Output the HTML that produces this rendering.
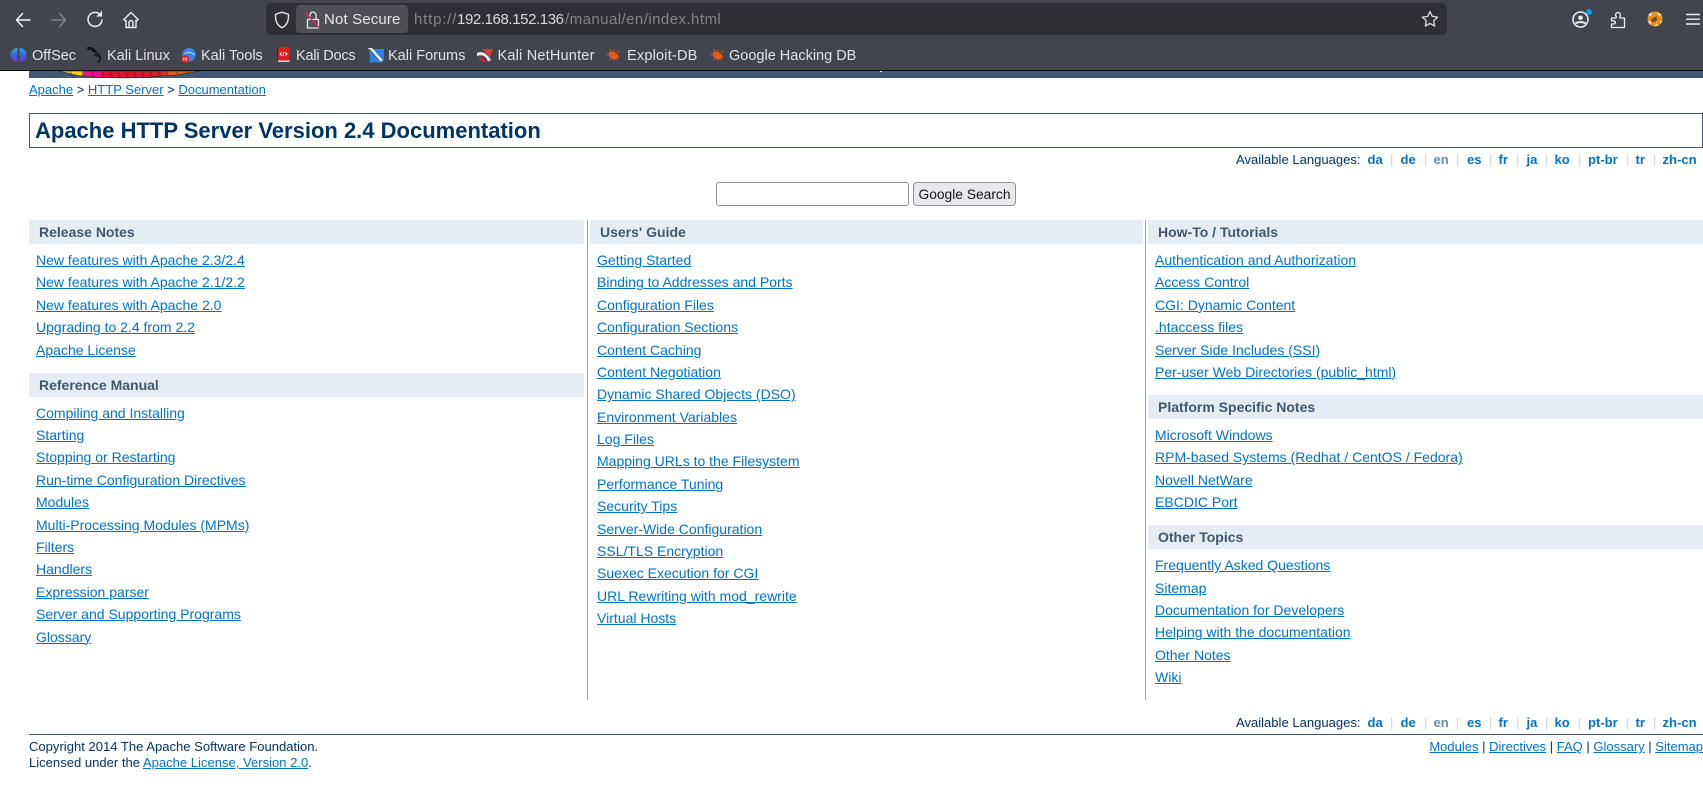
<!DOCTYPE html>
<html lang="en"><head><meta charset="utf-8"><title>Apache HTTP Server Version 2.4 Documentation</title>
<style>
html,body{margin:0;padding:0;background:#fff;width:1703px;height:786px;overflow:hidden}
body{position:relative;font-family:"Liberation Sans",sans-serif;font-size:14.02px;color:#036}
a{color:#0073c7;text-decoration:underline}
.abs{position:absolute}
#tb{position:absolute;left:0;top:0;width:1703px;height:70px;background:#42454e}
#blk{position:absolute;left:0;top:70px;width:1703px;height:1px;background:#0c0c0d}
#blue{position:absolute;left:29px;top:71px;width:1674px;height:7px;background:#405871}
#url{position:absolute;left:266px;top:3px;width:1181px;height:32px;background:#2f3036;border-radius:5px}
#pill{position:absolute;left:296px;top:5px;width:112px;height:28px;background:#4e5056;border-radius:4px}
.ui{position:absolute;font-size:14.5px;line-height:20px;color:#e2e3e6;white-space:nowrap}
.ic{position:absolute;overflow:visible}
#h1{position:absolute;left:29px;top:113px;width:1672px;height:33px;border:1px solid #405871;margin:0}
#h1 span{position:absolute;left:5px;top:3px;font-size:22px;line-height:28px;font-weight:bold;color:#036;white-space:nowrap}
.bc{position:absolute;left:29px;top:81px;font-size:13px;line-height:18px;color:#036;white-space:nowrap}
.lg{position:absolute;font-size:13.05px;line-height:16px;white-space:nowrap;color:#036}
.lg b a{text-decoration:none}
.lg.s{color:#ccd3da}
.lg.e{color:#6b8cae;font-weight:bold}
#q{position:absolute;left:716px;top:182px;width:193px;height:24px;box-sizing:border-box;border:1px solid #8f8f9d;border-radius:3px;background:#fff}
#b{position:absolute;left:913px;top:182px;width:103px;height:24px;box-sizing:border-box;border:1px solid #8f8f9d;border-radius:4px;background:#e9e9ed;color:#15141a;font-size:13.8px;line-height:23px;text-align:center;white-space:nowrap}
.col{position:absolute;top:220px}
.col section{margin-bottom:11.8px}
.col h2{margin:0;height:24px;line-height:24px;background:#e5ecf3;color:#405871;font-size:14px;font-weight:bold;padding-left:10px;white-space:nowrap}
.col ul{list-style:none;margin:4.95px 0 0;padding:0 0 0 7px}
.col li{height:22.4px;line-height:22.4px;white-space:nowrap}
.vl{position:absolute;top:220px;width:1px;height:480px;background:#a2a2a2}
#fl{position:absolute;left:29px;top:734px;width:1674px;height:1px;background:#405871}
.ft{position:absolute;font-size:13.05px;line-height:16px;white-space:nowrap;color:#036}
</style></head><body>
<div id="tb"></div><div id="blk"></div>
<div id="blue"></div>
<svg class="ic" style="left:0;top:71px" width="260" height="8" viewBox="0 71 260 8">
<defs><linearGradient id="fg" x1="59" x2="200" y1="0" y2="0" gradientUnits="userSpaceOnUse"><stop offset="0" stop-color="#f2d000"/><stop offset=".16" stop-color="#f8d010"/><stop offset=".18" stop-color="#f0109a"/><stop offset=".28" stop-color="#e8108a"/><stop offset=".33" stop-color="#e01030"/><stop offset=".72" stop-color="#d81a28"/><stop offset=".8" stop-color="#e8601a"/><stop offset="1" stop-color="#b87020"/></linearGradient></defs>
<path d="M59 71H200L176 75 150 77 126 78 100 77.5 78 75.5Z" fill="url(#fg)" stroke="#2a1a1a" stroke-width=".5"/>
<path d="M70 71l2 5M82 71l2 6M92 71l2 6M102 71l2 7M110 71l2 7M118 71l2 7M126 71l2 7M134 71l2 7M142 71l2 6M150 71l2 6M158 71l2 5M166 71l2 5M176 71l2 3M186 71l2 2" stroke="#3a1a20" stroke-width="1" opacity=".55"/>
</svg>
<div class="abs" style="left:880px;top:71px;width:2px;height:1px;background:#fff"></div>

<svg class="ic" style="left:14px;top:10px" width="18" height="20" viewBox="0 0 18 20" fill="none" stroke="#f2f3f5" stroke-width="1.5" stroke-linecap="round" stroke-linejoin="round"><path d="M2.5 10H16M8.5 3.5 2.5 10l6 6.5"/></svg>
<svg class="ic" style="left:50px;top:10px" width="18" height="20" viewBox="0 0 18 20" fill="none" stroke="#82848b" stroke-width="1.5" stroke-linecap="round" stroke-linejoin="round"><path d="M15.5 10H2M9.5 3.5l6 6.5-6 6.5"/></svg>
<svg class="ic" style="left:86px;top:10px" width="18" height="20" viewBox="0 0 18 20" fill="none" stroke="#eceded" stroke-width="1.5" stroke-linecap="round" stroke-linejoin="round"><path d="M13.7 4.2A7 7 0 1 0 16 10"/><path d="M15.5 1.5v4.6h-4.6" fill="#eceded" stroke-width="1"/></svg>
<svg class="ic" style="left:122px;top:10px" width="18" height="20" viewBox="0 0 18 20" fill="none" stroke="#eceded" stroke-width="1.4" stroke-linejoin="round"><path d="M1.800 9.500 9 2.500l7.200 7-1.500 1.400-.7-.6V17.500H4V10.300l-.7.6Z"/><path d="M7 17.500V12.500a2 2 0 0 1 4 0v5"/></svg>
<div id="url"></div><div id="pill"></div>
<svg class="ic" style="left:274px;top:11px" width="16" height="18" viewBox="0 0 16 18" fill="none" stroke="#e4e5e8" stroke-width="1.4" stroke-linejoin="round"><path d="M8 1.200 14.500 3.300c.2 6-1 10.500-6.500 13.500C2.500 13.800 1.300 9.300 1.500 3.300Z"/></svg>
<svg class="ic" style="left:305px;top:10px" width="16" height="20" viewBox="0 0 16 20" fill="none"><path d="M2.500 9.500H13.500V18H2.500ZM5 9.500V5a3 3 0 0 1 6 0V9.500" stroke="#e8e8ea" stroke-width="1.3"/><path d="M1 3 15 19" stroke="#e22850" stroke-width="1.500"/></svg>
<div class="ui" style="left:324px;top:10px;font-size:15px;letter-spacing:.15px;color:#e8e8ea">Not Secure</div>
<div class="ui" style="left:414px;top:10px;font-size:15px;letter-spacing:.8px;color:#84858a">http://</div>
<div class="ui" style="left:457px;top:10px;font-size:15px;letter-spacing:-.4px;color:#d8d9dc">192.168.152.136</div>
<div class="ui" style="left:565px;top:10px;font-size:15px;letter-spacing:.45px;color:#84858a">/manual/en/index.html</div>
<svg class="ic" style="left:1421px;top:10px" width="18" height="18" viewBox="0 0 18 18" fill="none" stroke="#dcdde0" stroke-width="1.3" stroke-linejoin="round"><path d="M9 1.500 11.300 6.400l5.300.7-3.900 3.700 1 5.300L9 13.500 4.300 16.100l1-5.300L1.400 7.100l5.300-.7Z"/></svg>

<svg class="ic" style="left:1572px;top:11px" width="18" height="18" viewBox="0 0 18 18" fill="none" stroke="#eceded" stroke-width="1.500"><circle cx="8.500" cy="8.500" r="7.500"/><circle cx="8.500" cy="6.800" r="2.300" fill="#eceded" stroke="none"/><path d="M3.500 12.500c2-1.800 8-1.800 10 0" stroke-width="2"/></svg>
<div class="abs" style="left:1586px;top:9px;width:6px;height:6px;border-radius:50%;background:#0a9fea"></div>
<svg class="ic" style="left:1610px;top:11px" width="18" height="18" viewBox="0 0 18 18" fill="none" stroke="#eceded" stroke-width="1.300" stroke-linejoin="round"><path d="M1.500 7H5.500C6.500 7 6.500 6 6 5.300 5 3.800 6 1.500 8 1.500s3 2.300 2 3.800C9.600 6 9.600 7 10.500 7H14.500V16.500H1.500V13H3.500C6 13 6 9.800 3.500 9.800H1.500Z"/></svg>
<svg class="ic" style="left:1647px;top:11px" width="16" height="16" viewBox="0 0 16 16"><circle cx="8" cy="8" r="7.500" fill="#e8900f"/><path d="M1 4 5 1 4 5ZM10 1l5 3-3 1ZM1 10l3 1-1 3ZM7 15l3-2 1 2ZM13 10l2 0-2 3Z" fill="#f4f1ea"/><path d="M4 8 11 4.500 12 7 8 11l-3 0Z" fill="#7a4a18"/><path d="M9 6l3-1-1 3Z" fill="#f6b53c"/></svg>
<svg class="ic" style="left:1685px;top:12px" width="16" height="14" viewBox="0 0 16 14" stroke="#eceded" stroke-width="1.400"><path d="M1 2.500H15M1 7.200H15M1 12H15"/></svg>

<svg class="ic" style="left:11px;top:48px" width="15" height="14" viewBox="0 0 15 14"><defs><linearGradient id="os" x1="0" x2="0" y1="0" y2="1"><stop offset="0" stop-color="#2fa3d8"/><stop offset=".55" stop-color="#3a62d8"/><stop offset="1" stop-color="#7a30c8"/></linearGradient></defs><path d="M6.500 0A7 7 0 0 0 6.500 14ZM8.500 0A7 7 0 0 1 8.500 14Z" fill="url(#os)"/></svg>
<div class="ui" style="left:32px;top:46px">OffSec</div>
<svg class="ic" style="left:87px;top:47px" width="15" height="16" viewBox="0 0 15 16" fill="none" stroke="#0a0a0a" stroke-width="1.300" stroke-linecap="round"><path d="M.5 1C3 .5 6 1 8 3.500L5 3.800C8 4.500 11.500 6.500 13 9.500 14 12 12.500 13.500 11.500 15.500"/><path d="M1 2.500 5 2M7 8c1.500-.6 3 .2 4 1.500"/></svg>
<div class="ui" style="left:107px;top:46px">Kali Linux</div>
<svg class="ic" style="left:181px;top:48px" width="15" height="15" viewBox="0 0 15 15"><circle cx="8" cy="6.800" r="6.800" fill="#3c83e6"/><path d="M3.500 6c3-2.500 6-2.500 10 1" fill="none" stroke="#cfe2fb" stroke-width="1"/><circle cx="4" cy="11" r="4" fill="#e0242c"/><path d="M2.800 9.500v3M5.200 9.500v3" stroke="#fff" stroke-width="1"/></svg>
<div class="ui" style="left:201px;top:46px">Kali Tools</div>
<svg class="ic" style="left:277px;top:47px" width="13" height="16" viewBox="0 0 13 16"><rect x="0" y="0" width="1.500" height="15" fill="#1f2a55"/><rect x="1" y="0" width="11.500" height="13.500" fill="#d81e1e"/><rect x="1" y="13.500" width="11.500" height="1.500" fill="#d8d8d8"/><path d="M4.500 5.500 3 7 4.500 8.500M8.500 5.500 10 7 8.500 8.500M7.200 5 5.800 9" stroke="#fff" stroke-width=".9" fill="none"/></svg>
<div class="ui" style="left:296px;top:46px;letter-spacing:-.2px">Kali Docs</div>
<svg class="ic" style="left:368px;top:48px" width="16" height="15" viewBox="0 0 16 15"><path d="M1 1H16V13L13 14.500H2Z" fill="#2d80e6"/><path d="M0 0 4 0 14.500 12 12 14.500Z" fill="#f0f3f8"/><path d="M1.500 1.500 12.500 14" stroke="#333" stroke-width=".8"/></svg>
<div class="ui" style="left:388px;top:46px">Kali Forums</div>
<svg class="ic" style="left:477px;top:49px" width="16" height="13" viewBox="0 0 16 13"><path d="M5 0H16L13 8Z" fill="#e03a3a"/><path d="M0 4C4 2 9 3 14 11L11 12.500C9 7 5 5 0 7Z" fill="#f1f1f1"/><path d="M1 8C4 7 7 9 9 13L5 13Z" fill="#c7283a"/></svg>
<div class="ui" style="left:497.500px;top:46px;letter-spacing:.2px">Kali NetHunter</div>
<svg class="ic" style="left:606px;top:49px" width="14" height="12" viewBox="0 0 14 12"><ellipse cx="7.500" cy="6.500" rx="5.500" ry="3.400" transform="rotate(28 7.500 6.500)" fill="#e85a14"/><path d="M0 5.500l4 1M3.500 0l2 3M8 0 8 3M11 3l3-1M3 11l3-2M7.500 12 8 9.500" stroke="#e85a14" stroke-width=".9"/></svg>
<div class="ui" style="left:627px;top:46px;letter-spacing:.2px">Exploit-DB</div>
<svg class="ic" style="left:710px;top:49px" width="14" height="12" viewBox="0 0 14 12"><ellipse cx="7.500" cy="6.500" rx="5.500" ry="3.400" transform="rotate(28 7.500 6.500)" fill="#e85a14"/><path d="M0 5.500l4 1M3.500 0l2 3M8 0 8 3M11 3l3-1M3 11l3-2M7.500 12 8 9.500" stroke="#e85a14" stroke-width=".9"/></svg>
<div class="ui" style="left:729px;top:46px">Google Hacking DB</div>

<div class="bc"><a href="#">Apache</a> &gt; <a href="#">HTTP Server</a> &gt; <a href="#">Documentation</a></div>
<h1 id="h1"><span>Apache HTTP Server Version 2.4 Documentation</span></h1>

<div class="lg" style="left:1236px;top:152px">Available Languages:</div>
<div class="lg" style="left:1367.500px;top:152px"><b><a href="#">da</a></b></div><div class="lg s" style="left:1390px;top:152px">|</div>
<div class="lg" style="left:1400.500px;top:152px"><b><a href="#">de</a></b></div><div class="lg s" style="left:1424px;top:152px">|</div>
<div class="lg e" style="left:1433.500px;top:152px">en</div><div class="lg s" style="left:1456px;top:152px">|</div>
<div class="lg" style="left:1467px;top:152px"><b><a href="#">es</a></b></div><div class="lg s" style="left:1489px;top:152px">|</div>
<div class="lg" style="left:1498.500px;top:152px"><b><a href="#">fr</a></b></div><div class="lg s" style="left:1516px;top:152px">|</div>
<div class="lg" style="left:1526.500px;top:152px"><b><a href="#">ja</a></b></div><div class="lg s" style="left:1545px;top:152px">|</div>
<div class="lg" style="left:1554.500px;top:152px"><b><a href="#">ko</a></b></div><div class="lg s" style="left:1578px;top:152px">|</div>
<div class="lg" style="left:1588px;top:152px"><b><a href="#">pt-br</a></b></div><div class="lg s" style="left:1626px;top:152px">|</div>
<div class="lg" style="left:1635.500px;top:152px"><b><a href="#">tr</a></b></div><div class="lg s" style="left:1653px;top:152px">|</div>
<div class="lg" style="left:1662.500px;top:152px"><b><a href="#">zh-cn</a></b></div>

<div id="q"></div><div id="b">Google Search</div>

<div class="col" style="left:29px;width:555px">
<section><h2>Release Notes</h2><ul>
<li><a href="#">New features with Apache 2.3/2.4</a></li>
<li><a href="#">New features with Apache 2.1/2.2</a></li>
<li><a href="#">New features with Apache 2.0</a></li>
<li><a href="#">Upgrading to 2.4 from 2.2</a></li>
<li><a href="#">Apache License</a></li></ul></section>
<section><h2>Reference Manual</h2><ul>
<li><a href="#">Compiling and Installing</a></li>
<li><a href="#">Starting</a></li>
<li><a href="#">Stopping or Restarting</a></li>
<li><a href="#">Run-time Configuration Directives</a></li>
<li><a href="#">Modules</a></li>
<li><a href="#">Multi-Processing Modules (MPMs)</a></li>
<li><a href="#">Filters</a></li>
<li><a href="#">Handlers</a></li>
<li><a href="#">Expression parser</a></li>
<li><a href="#">Server and Supporting Programs</a></li>
<li><a href="#">Glossary</a></li></ul></section>
</div>
<div class="vl" style="left:587px"></div>
<div class="col" style="left:590px;width:553px">
<section><h2>Users' Guide</h2><ul>
<li><a href="#">Getting Started</a></li>
<li><a href="#">Binding to Addresses and Ports</a></li>
<li><a href="#">Configuration Files</a></li>
<li><a href="#">Configuration Sections</a></li>
<li><a href="#">Content Caching</a></li>
<li><a href="#">Content Negotiation</a></li>
<li><a href="#">Dynamic Shared Objects (DSO)</a></li>
<li><a href="#">Environment Variables</a></li>
<li><a href="#">Log Files</a></li>
<li><a href="#">Mapping URLs to the Filesystem</a></li>
<li><a href="#">Performance Tuning</a></li>
<li><a href="#">Security Tips</a></li>
<li><a href="#">Server-Wide Configuration</a></li>
<li><a href="#">SSL/TLS Encryption</a></li>
<li><a href="#">Suexec Execution for CGI</a></li>
<li><a href="#">URL Rewriting with mod_rewrite</a></li>
<li><a href="#">Virtual Hosts</a></li></ul></section>
</div>
<div class="vl" style="left:1145px"></div>
<div class="col" style="left:1148px;width:555px">
<section><h2>How-To / Tutorials</h2><ul>
<li><a href="#">Authentication and Authorization</a></li>
<li><a href="#">Access Control</a></li>
<li><a href="#">CGI: Dynamic Content</a></li>
<li><a href="#">.htaccess files</a></li>
<li><a href="#">Server Side Includes (SSI)</a></li>
<li><a href="#">Per-user Web Directories (public_html)</a></li></ul></section>
<section><h2>Platform Specific Notes</h2><ul>
<li><a href="#">Microsoft Windows</a></li>
<li><a href="#">RPM-based Systems (Redhat / CentOS / Fedora)</a></li>
<li><a href="#">Novell NetWare</a></li>
<li><a href="#">EBCDIC Port</a></li></ul></section>
<section><h2>Other Topics</h2><ul>
<li><a href="#">Frequently Asked Questions</a></li>
<li><a href="#">Sitemap</a></li>
<li><a href="#">Documentation for Developers</a></li>
<li><a href="#">Helping with the documentation</a></li>
<li><a href="#">Other Notes</a></li>
<li><a href="#">Wiki</a></li></ul></section>
</div>

<div class="lg" style="left:1236px;top:715px">Available Languages:</div>
<div class="lg" style="left:1367.500px;top:715px"><b><a href="#">da</a></b></div><div class="lg s" style="left:1390px;top:715px">|</div>
<div class="lg" style="left:1400.500px;top:715px"><b><a href="#">de</a></b></div><div class="lg s" style="left:1424px;top:715px">|</div>
<div class="lg e" style="left:1433.500px;top:715px">en</div><div class="lg s" style="left:1456px;top:715px">|</div>
<div class="lg" style="left:1467px;top:715px"><b><a href="#">es</a></b></div><div class="lg s" style="left:1489px;top:715px">|</div>
<div class="lg" style="left:1498.500px;top:715px"><b><a href="#">fr</a></b></div><div class="lg s" style="left:1516px;top:715px">|</div>
<div class="lg" style="left:1526.500px;top:715px"><b><a href="#">ja</a></b></div><div class="lg s" style="left:1545px;top:715px">|</div>
<div class="lg" style="left:1554.500px;top:715px"><b><a href="#">ko</a></b></div><div class="lg s" style="left:1578px;top:715px">|</div>
<div class="lg" style="left:1588px;top:715px"><b><a href="#">pt-br</a></b></div><div class="lg s" style="left:1626px;top:715px">|</div>
<div class="lg" style="left:1635.500px;top:715px"><b><a href="#">tr</a></b></div><div class="lg s" style="left:1653px;top:715px">|</div>
<div class="lg" style="left:1662.500px;top:715px"><b><a href="#">zh-cn</a></b></div>
<div id="fl"></div>
<div class="ft" style="left:29px;top:739px">Copyright 2014 The Apache Software Foundation.<br>Licensed under the <a href="#">Apache License, Version 2.0</a>.</div>
<div class="ft" style="right:0;top:739px;font-size:13px"><a href="#">Modules</a> | <a href="#">Directives</a> | <a href="#">FAQ</a> | <a href="#">Glossary</a> | <a href="#">Sitemap</a></div>
</body></html>
